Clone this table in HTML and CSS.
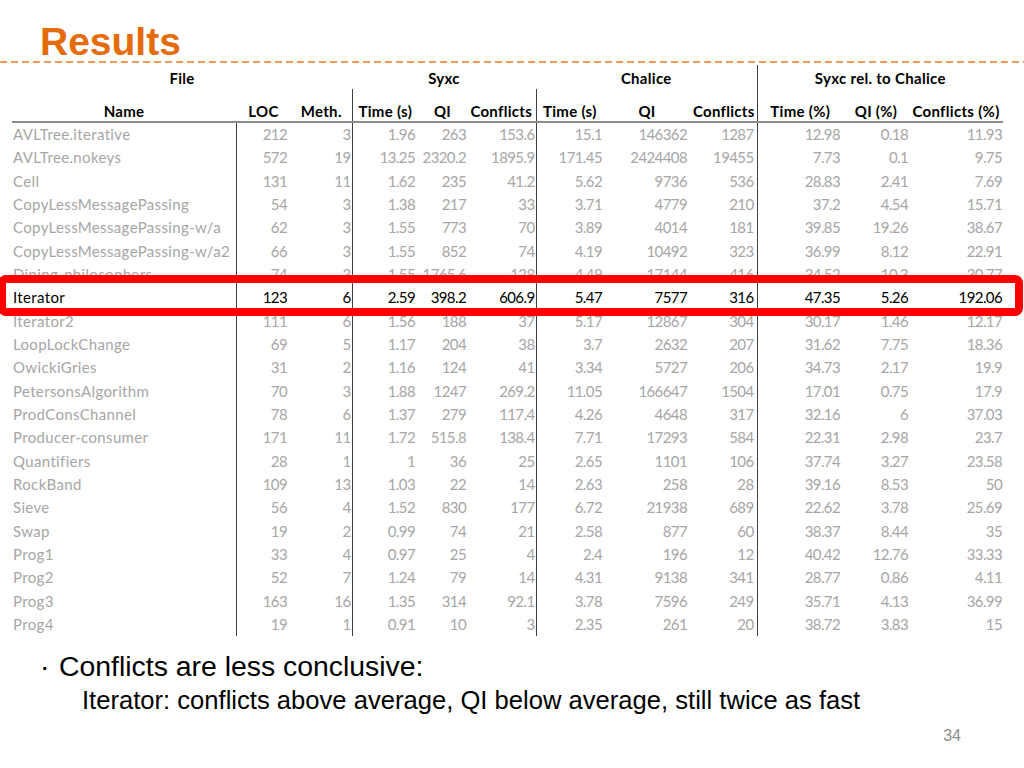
FILE: index.html
```html
<!DOCTYPE html>
<html>
<head>
<meta charset="utf-8">
<link rel="stylesheet" href="styles.css">
</head>
<body>
<div class="slide">
  <h1 class="title">Results</h1>
  <div class="dash-rule"></div>
  <table class="results">
    <colgroup>
      <col class="w-name"><col class="w-loc"><col class="w-meth">
      <col class="w-st"><col class="w-sq"><col class="w-sc">
      <col class="w-ct"><col class="w-cq"><col class="w-cc">
      <col class="w-rt"><col class="w-rq"><col class="w-rc">
    </colgroup>
    <thead>
      <tr class="group-row">
        <th colspan="3">File</th>
        <th colspan="3">Syxc</th>
        <th colspan="3">Chalice</th>
        <th colspan="3" class="sep">Syxc rel. to Chalice</th>
      </tr>
      <tr class="col-row">
        <th>Name</th><th>LOC</th><th>Meth.</th>
        <th class="sep">Time (s)</th><th>QI</th><th>Conflicts</th>
        <th class="sep">Time (s)</th><th>QI</th><th>Conflicts</th>
        <th class="sep">Time (%)</th><th>QI (%)</th><th>Conflicts (%)</th>
      </tr>
    </thead>
    <tbody>
      <tr><td>AVLTree.iterative</td><td>212</td><td>3</td><td>1.96</td><td>263</td><td>153.6</td><td>15.1</td><td>146362</td><td>1287</td><td>12.98</td><td>0.18</td><td>11.93</td></tr>
      <tr><td>AVLTree.nokeys</td><td>572</td><td>19</td><td>13.25</td><td>2320.2</td><td>1895.9</td><td>171.45</td><td>2424408</td><td>19455</td><td>7.73</td><td>0.1</td><td>9.75</td></tr>
      <tr><td>Cell</td><td>131</td><td>11</td><td>1.62</td><td>235</td><td>41.2</td><td>5.62</td><td>9736</td><td>536</td><td>28.83</td><td>2.41</td><td>7.69</td></tr>
      <tr><td>CopyLessMessagePassing</td><td>54</td><td>3</td><td>1.38</td><td>217</td><td>33</td><td>3.71</td><td>4779</td><td>210</td><td>37.2</td><td>4.54</td><td>15.71</td></tr>
      <tr><td>CopyLessMessagePassing-w/a</td><td>62</td><td>3</td><td>1.55</td><td>773</td><td>70</td><td>3.89</td><td>4014</td><td>181</td><td>39.85</td><td>19.26</td><td>38.67</td></tr>
      <tr><td>CopyLessMessagePassing-w/a2</td><td>66</td><td>3</td><td>1.55</td><td>852</td><td>74</td><td>4.19</td><td>10492</td><td>323</td><td>36.99</td><td>8.12</td><td>22.91</td></tr>
      <tr><td>Dining-philosophers</td><td>74</td><td>3</td><td>1.55</td><td>1765.6</td><td>128</td><td>4.49</td><td>17144</td><td>416</td><td>34.52</td><td>10.3</td><td>30.77</td></tr>
      <tr class="focus"><td>Iterator</td><td>123</td><td>6</td><td>2.59</td><td>398.2</td><td>606.9</td><td>5.47</td><td>7577</td><td>316</td><td>47.35</td><td>5.26</td><td>192.06</td></tr>
      <tr><td>Iterator2</td><td>111</td><td>6</td><td>1.56</td><td>188</td><td>37</td><td>5.17</td><td>12867</td><td>304</td><td>30.17</td><td>1.46</td><td>12.17</td></tr>
      <tr><td>LoopLockChange</td><td>69</td><td>5</td><td>1.17</td><td>204</td><td>38</td><td>3.7</td><td>2632</td><td>207</td><td>31.62</td><td>7.75</td><td>18.36</td></tr>
      <tr><td>OwickiGries</td><td>31</td><td>2</td><td>1.16</td><td>124</td><td>41</td><td>3.34</td><td>5727</td><td>206</td><td>34.73</td><td>2.17</td><td>19.9</td></tr>
      <tr><td>PetersonsAlgorithm</td><td>70</td><td>3</td><td>1.88</td><td>1247</td><td>269.2</td><td>11.05</td><td>166647</td><td>1504</td><td>17.01</td><td>0.75</td><td>17.9</td></tr>
      <tr><td>ProdConsChannel</td><td>78</td><td>6</td><td>1.37</td><td>279</td><td>117.4</td><td>4.26</td><td>4648</td><td>317</td><td>32.16</td><td>6</td><td>37.03</td></tr>
      <tr><td>Producer-consumer</td><td>171</td><td>11</td><td>1.72</td><td>515.8</td><td>138.4</td><td>7.71</td><td>17293</td><td>584</td><td>22.31</td><td>2.98</td><td>23.7</td></tr>
      <tr><td>Quantifiers</td><td>28</td><td>1</td><td>1</td><td>36</td><td>25</td><td>2.65</td><td>1101</td><td>106</td><td>37.74</td><td>3.27</td><td>23.58</td></tr>
      <tr><td>RockBand</td><td>109</td><td>13</td><td>1.03</td><td>22</td><td>14</td><td>2.63</td><td>258</td><td>28</td><td>39.16</td><td>8.53</td><td>50</td></tr>
      <tr><td>Sieve</td><td>56</td><td>4</td><td>1.52</td><td>830</td><td>177</td><td>6.72</td><td>21938</td><td>689</td><td>22.62</td><td>3.78</td><td>25.69</td></tr>
      <tr><td>Swap</td><td>19</td><td>2</td><td>0.99</td><td>74</td><td>21</td><td>2.58</td><td>877</td><td>60</td><td>38.37</td><td>8.44</td><td>35</td></tr>
      <tr><td>Prog1</td><td>33</td><td>4</td><td>0.97</td><td>25</td><td>4</td><td>2.4</td><td>196</td><td>12</td><td>40.42</td><td>12.76</td><td>33.33</td></tr>
      <tr><td>Prog2</td><td>52</td><td>7</td><td>1.24</td><td>79</td><td>14</td><td>4.31</td><td>9138</td><td>341</td><td>28.77</td><td>0.86</td><td>4.11</td></tr>
      <tr><td>Prog3</td><td>163</td><td>16</td><td>1.35</td><td>314</td><td>92.1</td><td>3.78</td><td>7596</td><td>249</td><td>35.71</td><td>4.13</td><td>36.99</td></tr>
      <tr><td>Prog4</td><td>19</td><td>1</td><td>0.91</td><td>10</td><td>3</td><td>2.35</td><td>261</td><td>20</td><td>38.72</td><td>3.83</td><td>15</td></tr>
    </tbody>
  </table>
  <ul class="bullets">
    <li class="lvl1"><span class="dot">·</span>Conflicts are less conclusive:</li>
    <li class="lvl2">Iterator: conflicts above average, QI below average, still twice as fast</li>
  </ul>
  <div class="page-num">34</div>
  <div class="highlight"></div>
</div>
</body>
</html>
```

FILE: styles.css
```css
html, body {
  margin: 0;
  padding: 0;
  background: #ffffff;
}

.slide {
  position: relative;
  width: 1024px;
  height: 768px;
  overflow: hidden;
  background: #ffffff;
}

.title {
  margin: 0;
  padding: 22px 0 0 40px;
  height: 39px;
  font-family: "Liberation Sans", Arial, sans-serif;
  font-weight: bold;
  font-size: 39px;
  line-height: 39px;
  color: #e46c0a;
}

.dash-rule {
  height: 2px;
  background: repeating-linear-gradient(to right, #ef9b58 0, #ef9b58 7px, transparent 7px, transparent 11px);
}

.results {
  margin: 2px 0 0 12px;
  width: 991px;
  table-layout: fixed;
  border-collapse: collapse;
  font-family: Lato, "Open Sans", sans-serif;
  font-size: 15px;
}

.w-name { width: 224px; }
.w-loc { width: 55px; }
.w-meth { width: 61px; }
.w-st { width: 66px; }
.w-sq { width: 49px; }
.w-sc { width: 69px; }
.w-ct { width: 67px; }
.w-cq { width: 88px; }
.w-cc { width: 66px; }
.w-rt { width: 86px; }
.w-rq { width: 66px; }
.w-rc { width: 94px; }

.results th {
  padding: 0;
  font-weight: bold;
  color: #000000;
  text-align: center;
  white-space: nowrap;
  letter-spacing: 0.3px;
}

.group-row th {
  height: 24px;
  padding-top: 2px;
  box-sizing: border-box;
  vertical-align: middle;
}

.col-row th {
  height: 31px;
  vertical-align: bottom;
  padding-bottom: 1px;
  border-bottom: 2px solid #8c8c8c;
}

.results th.sep {
  border-left: 1px solid #404040;
}

.results td {
  height: 23.33px;
  padding: 0;
  line-height: 23px;
  color: #a6a6a6;
  text-align: right;
  white-space: nowrap;
  vertical-align: middle;
  letter-spacing: -0.6px;
}

.results td:nth-child(1) {
  text-align: left;
  padding-left: 1px;
  letter-spacing: 0.35px;
}

.results td:nth-child(2) { border-left: 1px solid #404040; padding-right: 4px; }
.results td:nth-child(3) { padding-right: 1px; }
.results td:nth-child(4) { border-left: 1px solid #404040; padding-right: 3px; }
.results td:nth-child(5) { padding-right: 1px; }
.results td:nth-child(6) { padding-right: 1px; }
.results td:nth-child(7) { border-left: 1px solid #404040; padding-right: 1px; }
.results td:nth-child(8) { padding-right: 4px; }
.results td:nth-child(9) { padding-right: 3px; }
.results td:nth-child(10) { border-left: 1px solid #404040; padding-right: 3px; }
.results td:nth-child(11) { padding-right: 1px; }
.results td:nth-child(12) { padding-right: 1px; }

.results tr.focus td {
  color: #000000;
}

.bullets {
  list-style: none;
  margin: 12px 0 0 0;
  padding: 0;
  font-family: "Liberation Sans", Arial, sans-serif;
  color: #000000;
}

.bullets li {
  line-height: 36px;
  white-space: nowrap;
}

.lvl1 {
  font-size: 28.4px;
  padding-left: 40px;
}

.lvl1 .dot {
  display: inline-block;
  width: 19px;
}

.lvl2 {
  font-size: 25.6px;
  padding-left: 82px;
  margin-top: -2px;
}

.page-num {
  margin-top: 8px;
  padding-right: 63px;
  text-align: right;
  font-family: "Liberation Sans", Arial, sans-serif;
  font-size: 16px;
  line-height: 20px;
  color: #8c8c8c;
}

.highlight {
  position: absolute;
  left: -2px;
  top: 275px;
  width: 1025px;
  height: 41px;
  box-sizing: border-box;
  border: 8px solid #ff0000;
  border-radius: 8px;
}
```
